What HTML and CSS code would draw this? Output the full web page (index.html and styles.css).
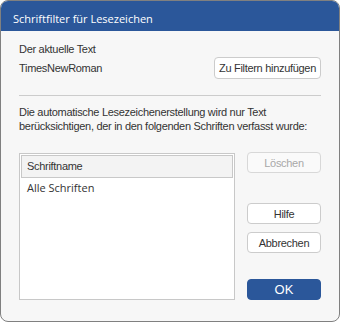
FILE: index.html
```html
<!DOCTYPE html>
<html lang="de">
<head>
    <meta charset="UTF-8">
    <title>Schriftfilter für Lesezeichen</title>
    <link rel="stylesheet" href="styles.css">
</head>
<body>
    <div class="dialog">
        <div class="titlebar">Schriftfilter für Lesezeichen</div>

        <div class="content">
            <div class="label">Der aktuelle Text</div>
            <div class="current-row">
                <span>TimesNewRoman</span>
                <button class="btn add-button">Zu Filtern hinzufügen</button>
            </div>

            <div class="separator"></div>

            <p class="info">Die automatische Lesezeichenerstellung wird nur Text berücksichtigen, der in den folgenden Schriften verfasst wurde:</p>

            <div class="lower">
                <div class="font-list">
                    <div class="list-header">Schriftname</div>
                    <div class="list-item">Alle Schriften</div>
                </div>

                <div class="actions">
                    <button class="btn" disabled>Löschen</button>
                    <button class="btn help-button">Hilfe</button>
                    <button class="btn cancel-button">Abbrechen</button>
                    <button class="btn ok-button">OK</button>
                </div>
            </div>
        </div>
    </div>
</body>
</html>
```

FILE: styles.css
```css
body {
    margin: 0;
    padding: 0;
    background-color: #ffffff;
    font-family: 'Liberation Sans', Arial, sans-serif;
    font-size: 11px;
    letter-spacing: -0.3px;
    color: #333333;
}

.dialog {
    width: 340px;
    height: 322px;
    box-sizing: border-box;
    border: 1px solid #808080;
    border-radius: 8px;
    background-color: #f7f7f7;
    overflow: hidden;
    display: flex;
    flex-direction: column;
}

.titlebar {
    height: 30px;
    line-height: 30px;
    padding: 3px 12px 0;
    box-sizing: border-box;
    background-color: #2b579a;
    color: white;
    font-family: 'Open Sans', sans-serif;
    font-size: 11px;
    letter-spacing: 0;
}

.content {
    flex: 1;
    display: flex;
    flex-direction: column;
    padding: 11px 18px 21px;
}

.label {
    line-height: 14px;
}

.current-row {
    display: flex;
    justify-content: space-between;
    align-items: center;
    margin-top: 1px;
}

.btn {
    font-family: 'Liberation Sans', Arial, sans-serif;
    font-size: 11px;
    letter-spacing: -0.3px;
    color: #333333;
    background-color: white;
    border: 1px solid #cccccc;
    border-radius: 4px;
    height: 21px;
    width: 74px;
    padding: 0;
    white-space: nowrap;
    cursor: pointer;
}

.btn:disabled {
    color: #a8a8a8;
    border-color: #d8d8d8;
    background-color: #fafafa;
}

.add-button {
    width: 107px;
    height: 22px;
}

.separator {
    height: 1px;
    background-color: #cccccc;
    margin-top: 16px;
}

.info {
    margin: 9px 0 0;
    line-height: 14px;
}

.lower {
    flex: 1;
    display: flex;
    justify-content: space-between;
    margin-top: 19px;
}

.font-list {
    width: 216px;
    box-sizing: border-box;
    margin-top: 1px;
    padding: 1px;
    background-color: white;
    border: 1px solid #c8c8c8;
}

.list-header {
    height: 23px;
    line-height: 21px;
    box-sizing: border-box;
    padding-left: 5px;
    background-color: #f3f3f3;
    border: 1px solid #c8c8c8;
}

.list-item {
    height: 19px;
    line-height: 19px;
    padding-left: 6px;
    font-family: 'Open Sans', sans-serif;
    font-size: 11px;
    letter-spacing: 0;
}

.actions {
    display: flex;
    flex-direction: column;
}

.help-button {
    margin-top: 30px;
}

.cancel-button {
    margin-top: 8px;
}

.ok-button {
    margin-top: auto;
    background-color: #2b579a;
    border-color: #2b579a;
    color: white;
    font-size: 13px;
    letter-spacing: 0;
}
```
